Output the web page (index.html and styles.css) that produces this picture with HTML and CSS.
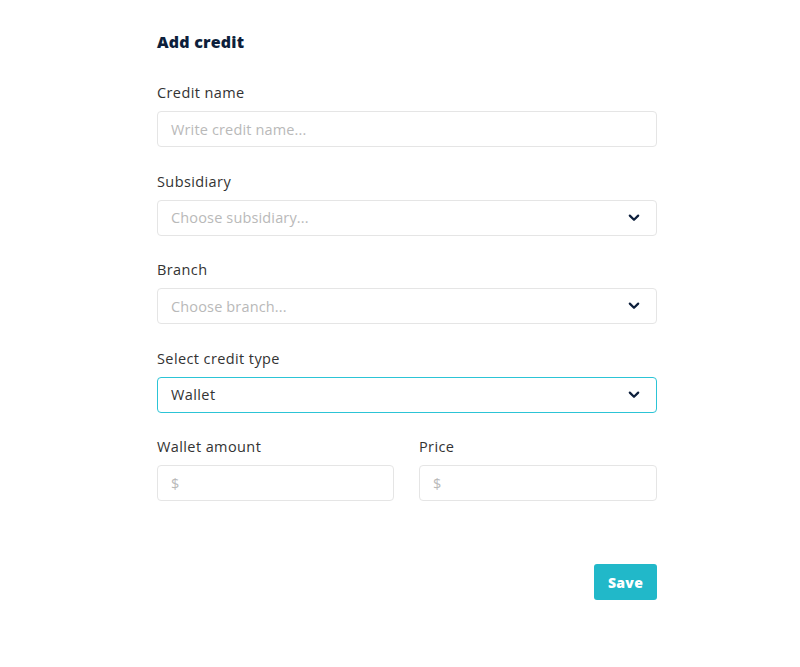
FILE: index.html
```html
<!DOCTYPE html>
<html lang="en">
<head>
<meta charset="utf-8">
<title>Add credit</title>
<link rel="stylesheet" href="styles.css">
</head>
<body>
<main class="page">
  <form class="form">
    <h1 class="title">Add credit</h1>

    <div class="field">
      <label class="label">Credit name</label>
      <div class="control"><span class="placeholder">Write credit name...</span></div>
    </div>

    <div class="field">
      <label class="label">Subsidiary</label>
      <div class="control select"><span class="placeholder">Choose subsidiary...</span>
        <svg class="chev" width="12" height="8" viewBox="0 0 12 8"><path d="M1.8 1.6 L6 5.8 L10.2 1.6" fill="none" stroke="#0d1f3c" stroke-width="2.2" stroke-linecap="round" stroke-linejoin="round"/></svg>
      </div>
    </div>

    <div class="field">
      <label class="label">Branch</label>
      <div class="control select"><span class="placeholder">Choose branch...</span>
        <svg class="chev" width="12" height="8" viewBox="0 0 12 8"><path d="M1.8 1.6 L6 5.8 L10.2 1.6" fill="none" stroke="#0d1f3c" stroke-width="2.2" stroke-linecap="round" stroke-linejoin="round"/></svg>
      </div>
    </div>

    <div class="field">
      <label class="label">Select credit type</label>
      <div class="control select active"><span class="value">Wallet</span>
        <svg class="chev" width="12" height="8" viewBox="0 0 12 8"><path d="M1.8 1.6 L6 5.8 L10.2 1.6" fill="none" stroke="#0d1f3c" stroke-width="2.2" stroke-linecap="round" stroke-linejoin="round"/></svg>
      </div>
    </div>

    <div class="row">
      <div class="field">
        <label class="label">Wallet amount</label>
        <div class="control"><span class="placeholder">$</span></div>
      </div>
      <div class="field">
        <label class="label">Price</label>
        <div class="control"><span class="placeholder">$</span></div>
      </div>
    </div>

    <div class="actions">
      <button type="button" class="btn">Save</button>
    </div>
  </form>
</main>
</body>
</html>
```
FILE: styles.css
```css
* { box-sizing: border-box; }
html, body { margin: 0; padding: 0; background: #ffffff; }
body { font-family: "Open Sans", "Noto Sans", sans-serif; color: #333333; }

.page { padding: 30px 0 0 157px; }
.form { width: 500px; }

.title {
  margin: 0 0 28px;
  font-size: 16px;
  line-height: 24px;
  font-weight: 800;
  letter-spacing: 0.2px;
  color: #0d1f3c;
}

.field { margin-bottom: 23.5px; }
.label {
  display: block;
  font-size: 14.5px;
  line-height: 21px;
  letter-spacing: 0.4px;
  margin-bottom: 8px;
  color: #333333;
}

.control {
  height: 36px;
  border: 1px solid #e5e5e5;
  border-radius: 4px;
  display: flex;
  align-items: center;
  padding: 0 16px 0 13px;
  font-size: 14.5px;
  letter-spacing: 0.4px;
}
.control.select { justify-content: space-between; }
.control.active { border-color: #2cc4d6; }
.placeholder { color: #b9b9b9; letter-spacing: 0.15px; }
.value { color: #333333; }
.chev { display: block; }

.row { display: grid; grid-template-columns: 237px 238px; column-gap: 25px; }
.row .field { margin-bottom: 0; }

.actions { display: flex; justify-content: flex-end; margin-top: 63px; }
.btn {
  width: 63px;
  height: 36px;
  border: 0;
  border-radius: 3px;
  background: #21b8c9;
  color: #ffffff;
  font-family: inherit;
  font-size: 14px;
  font-weight: 800;
  letter-spacing: 0.3px;
  padding: 0;
}
```
